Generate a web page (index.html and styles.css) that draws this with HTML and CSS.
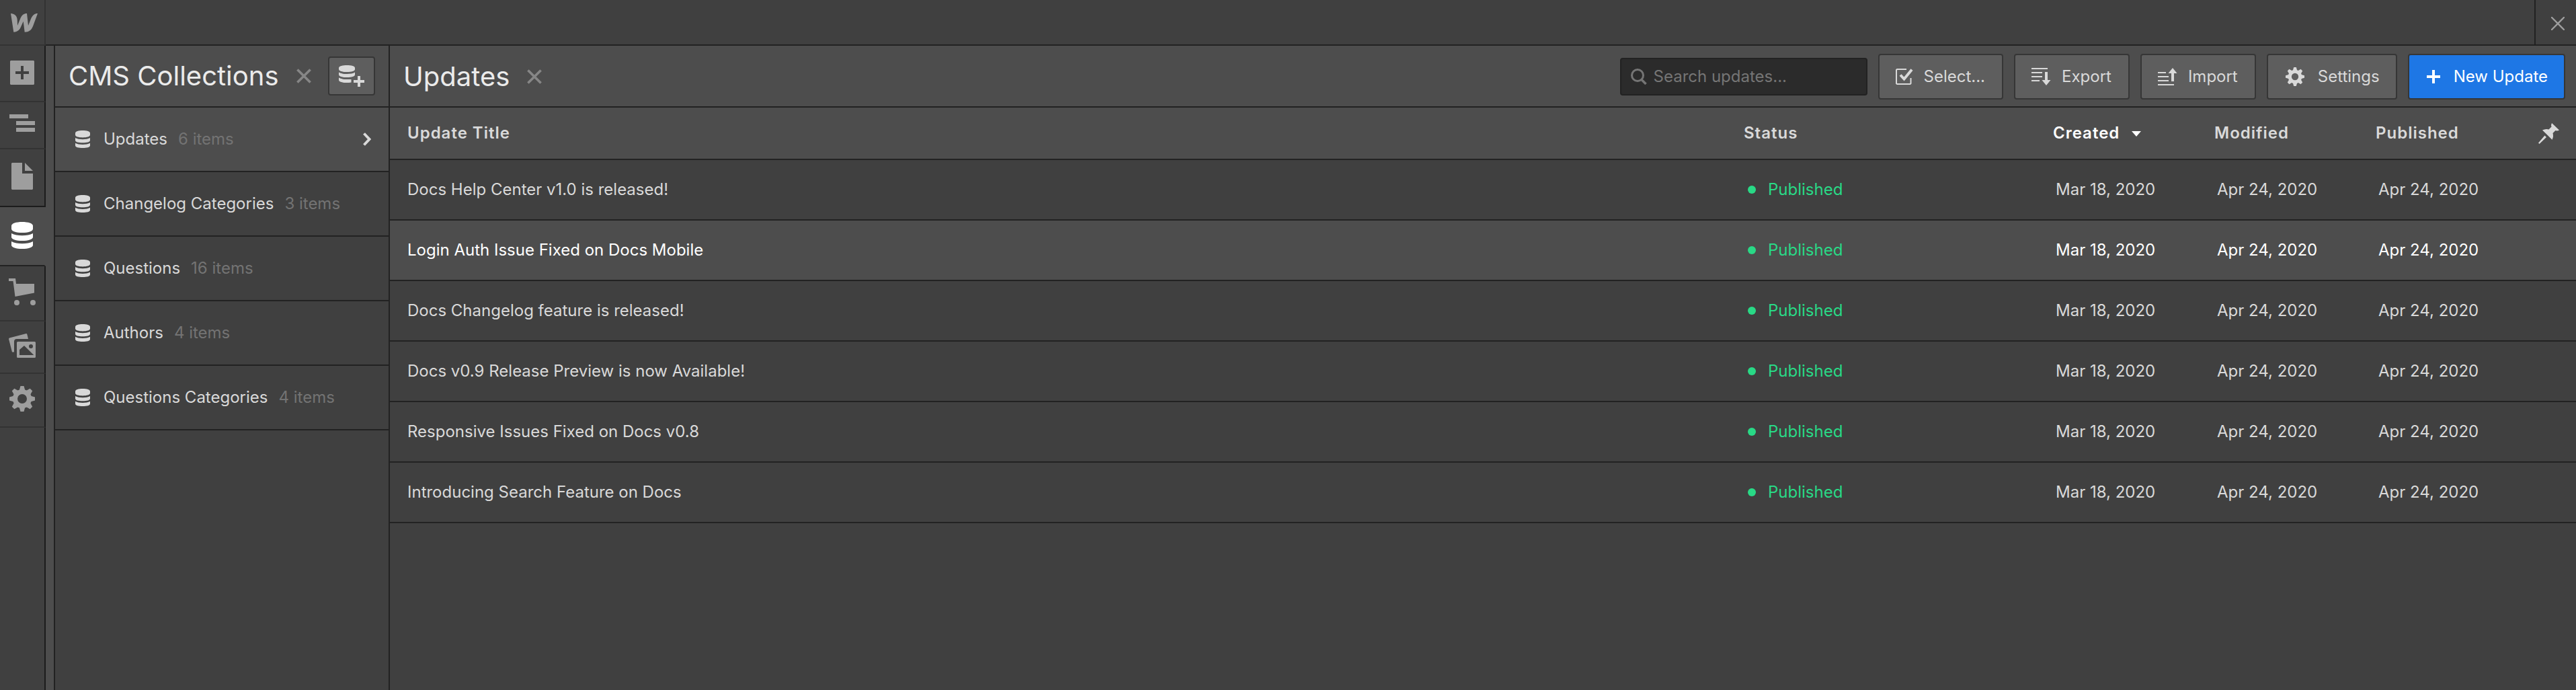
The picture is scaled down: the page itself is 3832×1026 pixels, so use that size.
FILE: index.html
```html
<!DOCTYPE html>
<html lang="en">
<head>
  <meta charset="UTF-8" />
  <title>CMS Collections - Updates</title>
  <link rel="stylesheet" href="styles.css">
</head>
<body>

  <!-- Icons -->
  <svg class="sprite" aria-hidden="true">
    <symbol id="i-db" viewBox="0 0 32 40" preserveAspectRatio="none">
      <path d="M0 6C0 2 7 0 16 0S32 2 32 6V10C32 14 25 16 16 16S0 14 0 10Z" />
      <path d="M0 17C4 19.3 10 20.3 16 20.3S28 19.3 32 17V22.5C32 26 25 28 16 28S0 26 0 22.5Z" />
      <path d="M0 29C4 31.3 10 32.3 16 32.3S28 31.3 32 29V34.5C32 38 25 40 16 40S0 38 0 34.5Z" />
    </symbol>
    <symbol id="i-gear" viewBox="0 0 38 38">
      <circle cx="19" cy="19" r="10.5" fill="none" stroke="currentColor" stroke-width="7" />
      <path id="tooth" d="M16.5 0H21.5L23.5 7H14.5Z" />
      <use href="#tooth" transform="rotate(45 19 19)" />
      <use href="#tooth" transform="rotate(90 19 19)" />
      <use href="#tooth" transform="rotate(135 19 19)" />
      <use href="#tooth" transform="rotate(180 19 19)" />
      <use href="#tooth" transform="rotate(225 19 19)" />
      <use href="#tooth" transform="rotate(270 19 19)" />
      <use href="#tooth" transform="rotate(315 19 19)" />
    </symbol>
    <symbol id="i-close" viewBox="0 0 22 22">
      <path d="M1.4 1.4L20.6 20.6M20.6 1.4L1.4 20.6" fill="none" stroke="currentColor" stroke-width="3.6" />
    </symbol>
  </svg>

  <header class="topbar">
    <a href="#" class="logo" aria-label="Home">
      <svg width="40" height="28" viewBox="0 0 40 28"><path d="M0 0C5 0 9.5 3.5 9.7 9.5L10 18L14.5 7C16.5 2.5 19.5 0 24 0L26 18L30 8C32.5 2.5 35.5 0 40 0L33 19C30.5 25 27 27.7 20.7 27.7L18.7 11.7L15.7 18.5C13.5 24.5 10 27.7 4.3 27.7Z" /></svg>
    </a>
    <button class="topbar-close" aria-label="Close">
      <svg width="20" height="20" viewBox="0 0 20 20"><path d="M1 1L19 19M19 1L1 19" fill="none" stroke="currentColor" stroke-width="2.4" stroke-linecap="round" /></svg>
    </button>
  </header>

  <div class="workspace">
    <nav class="tools">
      <button class="tool tool-add" aria-label="Add">
        <svg width="36" height="36" viewBox="0 0 36 36"><path fill-rule="evenodd" d="M1 0H35L36 1V35L35 36H1L0 35V1ZM16 8V16H8V20H16V28H20V20H28V16H20V8Z" /></svg>
      </button>
      <button class="tool tool-navigator" aria-label="Navigator">
        <svg width="38" height="26" viewBox="0 0 38 26"><path d="M0 0H28V6H0ZM10 10H38V16H10ZM10 20H38V26H10Z" /></svg>
      </button>
      <button class="tool tool-pages" aria-label="Pages">
        <svg width="32" height="40" viewBox="0 0 32 40"><path d="M0 1L1 0H16V16H32V39L31 40H1L0 39ZM20 0L32 12H20Z" /></svg>
      </button>
      <button class="tool tool-cms active" aria-label="CMS">
        <svg width="32" height="40"><use href="#i-db" /></svg>
      </button>
      <button class="tool" aria-label="Ecommerce">
        <svg width="40" height="40" viewBox="0 0 40 40"><path d="M0 0H10L11 8H38V21.5L9.5 27L6.5 4H0Z" /><circle cx="12" cy="36" r="4" /><circle cx="36" cy="36" r="4" /></svg>
      </button>
      <button class="tool" aria-label="Assets">
        <svg width="40" height="36" viewBox="0 0 40 36"><path d="M1 6.5L26 0Q27 0 27.3 1L29 8H12Q8 8 8 12V27.5H5L0 8Q0 7 1 6.5Z" /><path fill-rule="evenodd" d="M13.5 12H38.5Q40 12 40 13.5V34.5Q40 36 38.5 36H13.5Q12 36 12 34.5V13.5Q12 12 13.5 12ZM16 24V32H37.3L23 18ZM33 16A3 3 0 1 0 33 22A3 3 0 1 0 33 16Z" /></svg>
      </button>
      <button class="tool" aria-label="Project settings">
        <svg width="38" height="38"><use href="#i-gear" /></svg>
      </button>
    </nav>

    <aside class="collections">
      <div class="panel-head">
        <h2>CMS Collections</h2>
        <button class="close" aria-label="Close collections"><svg width="22" height="22"><use href="#i-close" /></svg></button>
        <button class="add-collection" aria-label="New collection">
          <svg width="38" height="32" viewBox="0 0 38 32">
            <path d="M0 4C0 1.4 5 0 12 0S24 1.4 24 4V6C24 8.6 19 10 12 10S0 8.6 0 6ZM0 10.5C3 12.3 7 13 12 13S21 12.3 24 10.5V14C24 16.6 19 18 12 18S0 16.6 0 14ZM0 18.5C3 20.3 7 21 12 21H18.5V25.5Q15.5 26 12 26C5 26 0 24.6 0 22Z" />
            <path d="M28 16H32V22H38V26H32V32H28V26H22V22H28Z" />
          </svg>
        </button>
      </div>
      <ul class="collection-list">
        <li><a href="#" class="collection active"><svg width="22" height="26"><use href="#i-db" /></svg><span>Updates</span><small>6 items</small><svg class="chevron" width="12" height="20" viewBox="0 0 12 20"><path d="M1.5 1.5L9.5 10L1.5 18.5" fill="none" stroke="currentColor" stroke-width="4" /></svg></a></li>
        <li><a href="#" class="collection"><svg width="22" height="26"><use href="#i-db" /></svg><span>Changelog Categories</span><small>3 items</small></a></li>
        <li><a href="#" class="collection"><svg width="22" height="26"><use href="#i-db" /></svg><span>Questions</span><small>16 items</small></a></li>
        <li><a href="#" class="collection"><svg width="22" height="26"><use href="#i-db" /></svg><span>Authors</span><small>4 items</small></a></li>
        <li><a href="#" class="collection"><svg width="22" height="26"><use href="#i-db" /></svg><span>Questions Categories</span><small>4 items</small></a></li>
      </ul>
    </aside>

    <main class="items">
      <div class="panel-head">
        <h1>Updates</h1>
        <button class="close" aria-label="Close updates"><svg width="22" height="22"><use href="#i-close" /></svg></button>
        <div class="actions">
          <label class="search">
            <svg width="24" height="24" viewBox="0 0 24 24"><circle cx="10" cy="10" r="8.5" fill="none" stroke="currentColor" stroke-width="3" /><path d="M15.5 16L22.5 23" fill="none" stroke="currentColor" stroke-width="3.5" /></svg>
            <input type="text" placeholder="Search updates..." aria-label="Search updates" />
          </label>
          <button class="btn">
            <svg width="26" height="24" viewBox="0 0 26 24"><path d="M16 1H2L1 2V22L2 23H21.5L22.5 22V14" fill="none" stroke="currentColor" stroke-width="2" /><path d="M7 9.5L12.5 15.5L24 1.5" fill="none" stroke="currentColor" stroke-width="4" /></svg>
            Select...
          </button>
          <button class="btn">
            <svg width="29" height="26" viewBox="0 0 29 26"><path d="M0 0H24V2H0ZM0 6H16V8H0ZM0 12H16V14H0ZM0 18H12V20H0ZM20 6H24V18H28.5L22 26L15.5 18H20Z" /></svg>
            Export
          </button>
          <button class="btn">
            <svg width="29" height="26" viewBox="0 0 29 26"><path d="M0 6H12V8H0ZM0 12H16V14H0ZM0 18H16V20H0ZM0 24H24V26H0ZM22 0L28.5 8H24V20H20V8H15.5Z" /></svg>
            Import
          </button>
          <button class="btn btn-wide">
            <svg width="28" height="28"><use href="#i-gear" /></svg>
            Settings
          </button>
          <button class="btn btn-wide btn-primary">
            <svg width="20" height="20" viewBox="0 0 20 20"><path d="M8 0H12V8H20V12H12V20H8V12H0V8H8Z" /></svg>
            New Update
          </button>
        </div>
      </div>

      <table>
        <thead>
          <tr>
            <th>Update Title</th>
            <th class="col-status">Status</th>
            <th class="col-date sorted">Created<svg class="caret" width="14" height="8" viewBox="0 0 14 8"><path d="M0 0H14L7 8Z" /></svg></th>
            <th class="col-date">Modified</th>
            <th class="col-date">Published</th>
            <th class="col-pin">
              <button class="pin" aria-label="Pin columns"><svg width="31" height="31" viewBox="0 0 31 31"><path d="M20 0L31 10.5Q28 12 25.5 11L21.5 15Q23 20 20.5 24.7L6 10.5Q11 8 15.5 9.5L19.5 5.5Q18.5 2.5 20 0ZM9.5 18.5L12 21L1.5 31L0 29.5Z" /></svg></button>
            </th>
          </tr>
        </thead>
        <tbody>
          <tr><td>Docs Help Center v1.0 is released!</td><td><span class="status">Published</span></td><td class="date">Mar 18, 2020</td><td class="date">Apr 24, 2020</td><td class="date">Apr 24, 2020</td><td></td></tr>
          <tr class="hover"><td>Login Auth Issue Fixed on Docs Mobile</td><td><span class="status">Published</span></td><td class="date">Mar 18, 2020</td><td class="date">Apr 24, 2020</td><td class="date">Apr 24, 2020</td><td></td></tr>
          <tr><td>Docs Changelog feature is released!</td><td><span class="status">Published</span></td><td class="date">Mar 18, 2020</td><td class="date">Apr 24, 2020</td><td class="date">Apr 24, 2020</td><td></td></tr>
          <tr><td>Docs v0.9 Release Preview is now Available!</td><td><span class="status">Published</span></td><td class="date">Mar 18, 2020</td><td class="date">Apr 24, 2020</td><td class="date">Apr 24, 2020</td><td></td></tr>
          <tr><td>Responsive Issues Fixed on Docs v0.8</td><td><span class="status">Published</span></td><td class="date">Mar 18, 2020</td><td class="date">Apr 24, 2020</td><td class="date">Apr 24, 2020</td><td></td></tr>
          <tr><td>Introducing Search Feature on Docs</td><td><span class="status">Published</span></td><td class="date">Mar 18, 2020</td><td class="date">Apr 24, 2020</td><td class="date">Apr 24, 2020</td><td></td></tr>
        </tbody>
      </table>
    </main>
  </div>

</body>
</html>
```
FILE: styles.css
```css
* { box-sizing: border-box; margin: 0; padding: 0; }

body {
  font-family: Inter, "Liberation Sans", sans-serif;
  font-size: 24px;
  line-height: 32px;
  background: #404040;
  color: #d9d9d9;
  display: flex;
  flex-direction: column;
  min-height: 100vh;
}

svg { display: block; fill: currentColor; flex-shrink: 0; }

.sprite {
  position: absolute;
  width: 0;
  height: 0;
}

button {
  font: inherit;
  color: inherit;
  background: none;
  border: none;
  cursor: pointer;
}

a { color: inherit; text-decoration: none; }

/* Top bar */
.topbar {
  display: flex;
  justify-content: space-between;
  height: 68px;
  color: #9e9e9e;
  border-bottom: 2px solid #222;
}

.logo {
  width: 68px;
  height: 68px;
  padding: 20px 0 0 16px;
  border-right: 2px solid #333;
  border-bottom: 2px solid #333;
}

.topbar-close {
  width: 62px;
  padding: 4px 0 0 23px;
  border-left: 2px solid #222;
}

.workspace {
  display: flex;
  flex: 1;
}

/* Left toolbar */
.tools {
  width: 68px;
  display: flex;
  flex-direction: column;
  color: #9e9e9e;
}

.tools::after {
  content: "";
  flex: 1;
  border-right: 2px solid #1c1c1c;
}

.tool {
  display: flex;
  justify-content: center;
  padding: 18px 0 22px;
  border-right: 2px solid #1c1c1c;
  border-bottom: 2px solid #333;
}

.tool-add { padding: 22px 0 24px; }
.tool-navigator { padding: 18px 0 24px; }
.tool-pages { padding: 20px 0 24px; border-bottom-color: #1c1c1c; }
.tool-cms { padding: 22px 0 24px; border-bottom-color: #222; }

.tool.active {
  background: #4d4d4d;
  color: #fff;
  border-right-color: #4d4d4d;
}

/* Panels */
.panel-head {
  display: flex;
  align-items: center;
  height: 92px;
  background: #4d4d4d;
  border-bottom: 2px solid #222;
}

.panel-head h1,
.panel-head h2 {
  font-size: 40px;
  line-height: 48px;
  font-weight: 400;
  color: #ebebeb;
  white-space: nowrap;
}

.close {
  margin-left: 26px;
  color: #868686;
}

.collections {
  display: flex;
  flex-direction: column;
  flex-shrink: 0;
  width: 512px;
  border-left: 12px solid #4d4d4d;
  border-right: 2px solid #222;
}

.collections .panel-head,
.collection-list { border-left: 2px solid #222; }

.collections .panel-head { padding: 0 20px; }

.collection-list { flex: 1; list-style: none; }

.add-collection {
  width: 70px;
  height: 58px;
  padding: 0 14px;
  margin-left: auto;
  background: #5e5e5e;
  border: 2px solid #363636;
  border-radius: 4px;
}

.collection {
  display: flex;
  align-items: center;
  height: 96px;
  padding: 0 26px 0 30px;
  border-bottom: 2px solid #222;
}

.collection.active { background: #4d4d4d; }
.collection span { margin-left: 20px; }

.collection small {
  font-size: 24px;
  margin-left: 16px;
  color: #737373;
}

.chevron { margin-left: auto; }

.items { flex: 1; }
.items .panel-head { padding: 2px 16px 0 20px; }

.actions {
  display: flex;
  align-items: center;
  gap: 16px;
  margin-left: auto;
}

.search {
  display: flex;
  align-items: center;
  gap: 10px;
  width: 368px;
  height: 56px;
  padding: 0 14px;
  background: #2b2b2b;
  color: #757575;
  border: 2px solid #222;
  border-radius: 4px;
}

.search input {
  flex: 1;
  min-width: 0;
  font: inherit;
  color: #d9d9d9;
  background: none;
  border: none;
  outline: none;
}

.search input::placeholder { color: #757575; }

.btn {
  display: flex;
  align-items: center;
  gap: 16px;
  height: 68px;
  padding: 0 25px 0 24px;
  background: #5e5e5e;
  border: 2px solid #363636;
  border-radius: 4px;
  white-space: nowrap;
}

.btn-wide { padding: 0 24px 0 26px; gap: 20px; }
.btn-primary { background: #1e77e5; color: #fff; }

/* Items table */
table {
  width: 100%;
  table-layout: fixed;
  border-collapse: separate;
  border-spacing: 0;
}

th,
td {
  padding: 0 0 0 26px;
  text-align: left;
  border-bottom: 2px solid #222;
  white-space: nowrap;
}

th {
  height: 78px;
  font-weight: 600;
  letter-spacing: 1px;
  background: #4d4d4d;
}

td { height: 90px; }
.date { padding-left: 30px; }

.col-status { width: 460px; }
.col-date { width: 240px; }
.col-pin { width: 84px; padding-left: 28px; }
.sorted { color: #fff; }

.caret {
  display: inline-block;
  margin-left: 18px;
  vertical-align: middle;
}

.pin { display: block; }

.hover { background: #4d4d4d; color: #fff; }

.status {
  display: flex;
  align-items: center;
  gap: 18px;
  padding-left: 6px;
  color: #29d986;
}

.status::before {
  content: "";
  width: 12px;
  height: 12px;
  border-radius: 50%;
  background: #29d986;
}
```
